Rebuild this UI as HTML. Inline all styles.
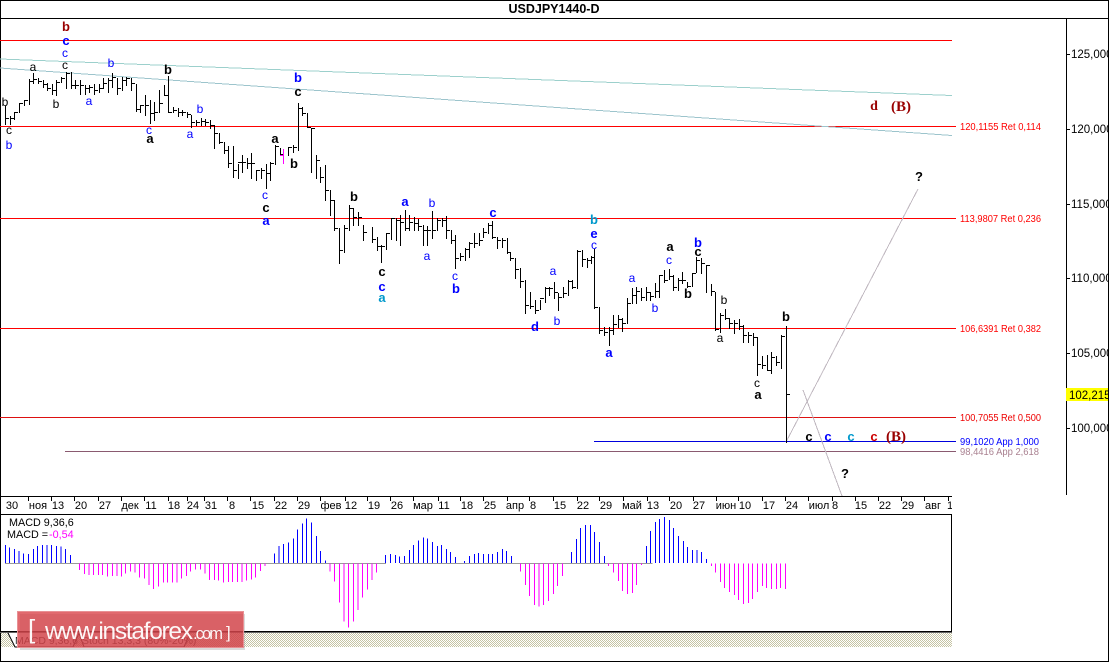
<!DOCTYPE html>
<html><head><meta charset="utf-8"><style>
html,body{margin:0;padding:0;background:#fff;width:1109px;height:662px;overflow:hidden}
svg{display:block;font-family:"Liberation Sans",sans-serif}
.r{font-size:12px;text-anchor:middle}
.h{font-size:13px;font-weight:bold;text-anchor:middle}
.s{font-family:"Liberation Serif",serif;font-size:15px;font-weight:bold;text-anchor:middle;fill:#990000}
.d{font-size:11px;text-anchor:middle;fill:#000}
.p{font-size:11.5px;fill:#000}
.l{font-size:10px}
.k{fill:#000}.bl{fill:#0000ff}.cy{fill:#0099cc}.dr{fill:#990000}.rd{fill:#cc0000}
</style></head><body>
<svg width="1109" height="662" viewBox="0 0 1109 662" xmlns="http://www.w3.org/2000/svg">
<defs><pattern id="ht" width="2" height="2" patternUnits="userSpaceOnUse"><rect width="2" height="2" fill="#fff"/><rect width="1" height="1" fill="#c6c4a4"/><rect x="1" y="1" width="1" height="1" fill="#c6c4a4"/></pattern></defs>
<rect width="1109" height="662" fill="#fff"/>
<g shape-rendering="crispEdges" fill="none">
<path d="M.5 0V661.5H1108.5V0M0 .5H1109M0 18.5H1108.5M1066.5 18V495" stroke="#000"/>
<path d="M1067 54.5h3M1067 129.5h3M1067 204.5h3M1067 278.5h3M1067 353.5h3M1067 428.5h3" stroke="#000"/>
<path d="M0 496.5H952M0 514.5H951.5V631M0 631.5H952" stroke="#000"/>
<path d="M0 632.5H952" stroke="#666"/>
<rect x="1" y="633" width="951" height="14" fill="url(#ht)"/>
<path d="M28.5 497v4M51.5 497v4M74.5 497v4M98.5 497v4M121.5 497v4M144.5 497v4M168.5 497v4M187.5 497v4M204.5 497v4M227.5 497v4M250.5 497v4M274.5 497v4M297.5 497v4M320.5 497v4M345.5 497v4M367.5 497v4M390.5 497v4M413.5 497v4M438.5 497v4M460.5 497v4M483.5 497v4M507.5 497v4M529.5 497v4M553.5 497v4M577.5 497v4M599.5 497v4M623.5 497v4M647.5 497v4M669.5 497v4M693.5 497v4M716.5 497v4M738.5 497v4M762.5 497v4M785.5 497v4M808.5 497v4M832.5 497v4M855.5 497v4M878.5 497v4M901.5 497v4M924.5 497v4M948.5 497v4" stroke="#000"/>
<path d="M0 40.5H952" stroke="#ff0000"/>
<path d="M0 126.5H956M0 218.5H956M0 328.5H956" stroke="#ff0000"/>
<path d="M0 417.5H956" stroke="#dd1111"/>
<path d="M594 441.5H956" stroke="#0000dd"/>
<path d="M65 451.5H956" stroke="#8a5a70"/>
</g>
<path d="M0 59 L952 95.5" stroke="#9cd0cc" stroke-width="1" fill="none" shape-rendering="crispEdges"/>
<path d="M0 68 L952 135.5" stroke="#9cc4cc" stroke-width="1" fill="none" shape-rendering="crispEdges"/>
<path d="M786 442L918 189M803 390L842 496" stroke="#c0b8c0" stroke-width="1" fill="none" shape-rendering="crispEdges"/>
<g transform="translate(.5,.5)" shape-rendering="crispEdges" fill="none" stroke="#000" stroke-linecap="square">
<path d="M5 106V124M5 118h3M10 116V124M10 118h3M14 112V119M14 112h3M19 103V112M19 103h3M24 100V105M24 100h3M29 79V104M29 81h3M33 73V83M33 79h3M38 78V83M38 81h3M43 80V87M43 84h3M47 83V90M47 88h3M52 84V94M52 90h3M56 80V95M56 82h3M61 77V82M61 78h3M66 72V88M66 73h3M71 72V88M71 85h3M75 80V88M75 85h3M80 80V94M80 85h3M85 85V94M85 88h3M89 85V92M89 87h3M94 84V94M94 90h3M99 84V92M99 88h3M103 78V88M103 83h3M108 78V92M108 80h3M112 73V87M112 77h3M117 78V94M117 88h3M122 77V90M122 80h3M126 77V85M126 78h3M131 78V90M131 83h3M136 84V111M136 109h3M140 105V112M140 105h3M145 95V115M145 105h3M150 100V123M150 113h3M154 102V120M154 112h3M159 90V112M159 103h3M164 85V95M164 95h3M168 76V112M168 112h3M173 107V112M173 110h3M178 108V116M178 112h3M182 110V115M182 112h3M187 112V117M187 114h3M191 115V127M191 122h3M196 120V125M196 122h3M201 118V125M201 121h3M205 119V125M205 122h3M210 120V128M210 125h3M214 125V148M214 133h3M219 133V143M219 142h3M224 142V153M224 150h3M228 146V167M228 163h3M233 146V177M233 170h3M238 164V178M238 162h3M242 155V172M242 162h3M247 158V168M247 163h3M251 153V178M251 163h3M256 170V180M256 170h3M261 168V178M261 170h3M266 164V188M266 173h3M270 162V180M270 163h3M275 145V164M275 146h3M280 148V155M280 154h3M288 148V155M288 147h3M293 145V152M293 147h3M298 103V150M298 108h3M302 107V115M302 113h3M307 113V127M307 127h3M311 128V172M311 128h3M316 155V178M316 160h3M320 167V182M320 177h3M325 165V200M325 190h3M330 190V215M330 200h3M334 200V230M334 228h3M339 228V263M339 250h3M344 225V252M344 228h3M349 205V230M349 208h3M353 208V225M353 217h3M358 212V225M358 217h3M363 225V240M363 232h3M372 227V242M372 239h3M377 237V250M377 246h3M381 245V262M381 246h3M386 233V249M386 233h3M391 218V239M391 218h3M396 218V240M396 220h3M400 215V245M400 222h3M405 210V230M405 228h3M409 215V230M409 222h3M414 217V230M414 223h3M418 219V230M418 226h3M423 225V245M423 230h3M427 226V245M427 230h3M432 211V238M432 230h3M437 218V230M437 220h3M442 218V226M442 220h3M446 216V238M446 230h3M451 230V243M451 240h3M455 235V268M455 258h3M460 253V260M460 256h3M465 248V260M465 249h3M469 242V257M469 243h3M474 233V247M474 243h3M479 233V245M479 240h3M483 228V237M483 232h3M488 223V233M488 225h3M492 221V238M492 237h3M497 237V248M497 240h3M502 238V247M502 240h3M507 238V253M507 252h3M510 252V260M510 258h3M515 258V278M515 269h3M520 268V287M520 281h3M525 280V313M525 305h3M530 292V308M530 306h3M535 300V313M535 310h3M540 300V309M540 298h3M545 287V302M545 288h3M549 287V295M549 288h3M554 282V298M554 292h3M558 293V310M558 297h3M563 287V297M563 293h3M568 280V295M568 281h3M572 280V288M572 287h3M577 250V288M577 251h3M582 250V266M582 259h3M587 258V267M587 260h3M591 256V263M591 257h3M594 249V308M594 307h3M599 307V333M599 330h3M604 327V335M604 332h3M609 327V345M609 330h3M613 315V334M613 324h3M618 315V327M618 319h3M622 318V331M622 323h3M627 298V323M627 303h3M632 288V303M632 295h3M636 287V303M636 291h3M641 288V300M641 297h3M646 287V300M646 292h3M650 292V300M650 296h3M655 283V297M655 291h3M659 275V297M659 275h3M664 270V282M664 280h3M669 269V279M669 276h3M673 275V290M673 287h3M678 278V290M678 280h3M682 272V283M682 280h3M687 282V287M687 286h3M692 273V286M692 273h3M696 257V272M696 260h3M701 258V273M701 263h3M706 265V292M706 265h3M711 284V295M711 291h3M715 292V330M715 329h3M720 313V332M720 315h3M725 309V319M725 318h3M729 318V328M729 323h3M734 320V333M734 323h3M739 319V329M739 326h3M743 325V342M743 335h3M748 332V342M748 335h3M753 333V345M753 337h3M757 337V375M757 364h3M762 356V368M762 365h3M767 355V370M767 370h3M771 352V373M771 357h3M776 356V365M776 362h3M781 335V368M781 336h3M786 326V442M786 394h3"/>
<path d="M283 149V163M280 155h3" stroke="#ff00ff"/>
</g>
<g class="d" font-size="11">
<text x="12" y="509" class="d">30</text><text x="38" y="509" class="d">ноя</text><text x="58" y="509" class="d">13</text><text x="81" y="509" class="d">20</text><text x="105" y="509" class="d">27</text><text x="130" y="509" class="d">дек</text><text x="151" y="509" class="d">11</text><text x="174" y="509" class="d">18</text><text x="193" y="509" class="d">24</text><text x="211" y="509" class="d">31</text><text x="232" y="509" class="d">8</text><text x="258" y="509" class="d">15</text><text x="281" y="509" class="d">22</text><text x="304" y="509" class="d">29</text><text x="331" y="509" class="d">фев</text><text x="351" y="509" class="d">12</text><text x="374" y="509" class="d">19</text><text x="397" y="509" class="d">26</text><text x="423" y="509" class="d">мар</text><text x="444" y="509" class="d">11</text><text x="467" y="509" class="d">18</text><text x="490" y="509" class="d">25</text><text x="515" y="509" class="d">апр</text><text x="533" y="509" class="d">8</text><text x="560" y="509" class="d">15</text><text x="583" y="509" class="d">22</text><text x="606" y="509" class="d">29</text><text x="632" y="509" class="d">май</text><text x="653" y="509" class="d">13</text><text x="676" y="509" class="d">20</text><text x="699" y="509" class="d">27</text><text x="726" y="509" class="d">июн</text><text x="745" y="509" class="d">10</text><text x="769" y="509" class="d">17</text><text x="792" y="509" class="d">24</text><text x="819" y="509" class="d">июл</text><text x="835" y="509" class="d">8</text><text x="861" y="509" class="d">15</text><text x="885" y="509" class="d">22</text><text x="908" y="509" class="d">29</text><text x="933" y="509" class="d">авг</text><text x="950" y="509" style="font-size:11px">1</text>
</g>
<rect x="952" y="497" width="6" height="17" fill="#fff"/>
<rect x="1066" y="388" width="42" height="13" fill="#ffff00"/>
<text x="1071" y="58" class="p">125,000</text><text x="1071" y="133" class="p">120,000</text><text x="1071" y="208" class="p">115,000</text><text x="1071" y="282" class="p">110,000</text><text x="1071" y="357" class="p">105,000</text><text x="1069" y="399" class="p">102,215</text><text x="1071" y="432" class="p">100,000</text>
<rect x="1108" y="0" width="1" height="662" fill="#000"/><rect x="1109" width="10" height="662" fill="#fff"/>
<text x="554" y="13" style="font-size:12.5px;font-weight:bold;text-anchor:middle" fill="#000">USDJPY1440-D</text>
<g class="l">
<text x="960" y="130" fill="#ff0000" textLength="81" lengthAdjust="spacingAndGlyphs">120,1155 Ret 0,114</text>
<text x="960" y="222" fill="#ff0000" textLength="81" lengthAdjust="spacingAndGlyphs">113,9807 Ret 0,236</text>
<text x="960" y="332" fill="#ff0000" textLength="81" lengthAdjust="spacingAndGlyphs">106,6391 Ret 0,382</text>
<text x="960" y="421" fill="#ee0000" textLength="81" lengthAdjust="spacingAndGlyphs">100,7055 Ret 0,500</text>
<text x="960" y="445" fill="#0000ff" textLength="79" lengthAdjust="spacingAndGlyphs">99,1020 App 1,000</text>
<text x="960" y="455" fill="#a98090" textLength="79" lengthAdjust="spacingAndGlyphs">98,4416 App 2,618</text>
</g>
<text x="66" y="31" class="h dr">b</text><text x="66" y="45" class="h bl">c</text><text x="65" y="57" class="r bl">c</text><text x="65" y="69" class="r k">c</text><text x="33" y="71" class="r k">a</text><text x="111" y="67" class="r bl">b</text><text x="168" y="74" class="h k">b</text><text x="5" y="106" class="r k">b</text><text x="9" y="134" class="r k">c</text><text x="9" y="149" class="r bl">b</text><text x="56" y="108" class="r k">b</text><text x="89" y="105" class="r bl">a</text><text x="149" y="134" class="r bl">c</text><text x="150" y="143" class="h k">a</text><text x="200" y="113" class="r bl">b</text><text x="190" y="138" class="r bl">a</text><text x="275" y="143" class="h k">a</text><text x="294" y="168" class="h k">b</text><text x="298" y="82" class="h bl">b</text><text x="298" y="96" class="h k">c</text><text x="265" y="199" class="r bl">c</text><text x="266" y="212" class="h k">c</text><text x="266" y="225" class="h bl">a</text><text x="354" y="201" class="h k">b</text>
<text x="382" y="276" class="h k">c</text><text x="382" y="291" class="h bl">c</text><text x="382" y="302" class="h cy">a</text><text x="405" y="206" class="h bl">a</text><text x="432" y="207" class="r bl">b</text><text x="427" y="260" class="r bl">a</text><text x="455" y="280" class="r bl">c</text><text x="456" y="293" class="h bl">b</text><text x="493" y="217" class="h bl">c</text><text x="535" y="331" class="h bl">d</text><text x="553" y="275" class="r bl">a</text><text x="557" y="325" class="r bl">b</text><text x="594" y="224" class="h cy">b</text><text x="594" y="238" class="h bl">e</text><text x="594" y="249" class="r bl">c</text><text x="609" y="357" class="h bl">a</text><text x="632" y="282" class="r bl">a</text><text x="655" y="312" class="r bl">b</text><text x="669" y="264" class="r bl">c</text><text x="670" y="251" class="h k">a</text><text x="698" y="247" class="h bl">b</text><text x="698" y="256" class="h k">c</text><text x="688" y="298" class="h k">b</text><text x="724" y="304" class="r k">b</text><text x="720" y="342" class="r k">a</text>
<text x="757" y="387" class="r k">c</text><text x="758" y="399" class="h k">a</text><text x="786" y="321" class="h k">b</text><text x="809" y="441" class="h k">c</text><text x="828" y="441" class="h bl">c</text><text x="851" y="441" class="h cy">c</text><text x="874" y="441" class="h rd">c</text><text x="896" y="441" class="s">(B)</text><text x="845" y="478" class="h k">?</text><text x="874" y="110" class="s" style="font-size:14px">d</text><text x="901" y="111" class="s">(B)</text><text x="919" y="181" class="h k">?</text>
<g transform="translate(0,490) scale(.33333)" shape-rendering="crispEdges" fill="none" stroke-width="3">
<path d="M15 220H1158" stroke="#999"/>
<path stroke="#0000ff" d="M16 219V165M28 219V172M43 219V177M57 219V183M70 219V191M85 219V192M100 219V177M113 219V168M127 219V165M141 219V165M155 219V165M169 219V168M183 219V170M197 219V177M211 219V195M823 219V190M837 219V168M851 219V162M865 219V157M880 219V145M893 219V118M907 219V100M919 219V85M935 219V97M949 219V138M961 219V183M976 219V212M1156 219V195M1171 219V192M1186 219V195M1199 219V200"/>
<path stroke="#ff00ff" d="M239 221V240M253 221V252M267 221V255M281 221V255M295 221V255M307 221V255M323 221V260M337 221V258M351 221V258M364 221V260M377 221V250M391 221V245M405 221V248M419 221V262M433 221V265M447 221V285M461 221V297M475 221V290M490 221V278M503 221V278M517 221V278M531 221V278M545 221V265M559 221V258M571 221V245M587 221V238M601 221V238M615 221V250M629 221V270M643 221V270M656 221V272M671 221V278M685 221V276M698 221V276M712 221V276M726 221V276M740 221V272M754 221V268M767 221V262M781 221V243M795 221V228M990 221V245M1004 221V275M1018 221V338M1032 221V395M1045 221V413M1060 221V395M1074 221V360M1088 221V323M1102 221V298M1116 221V270M1130 221V248"/>
</g>
<g transform="translate(400,490) scale(.33333)" shape-rendering="crispEdges" fill="none" stroke-width="3">
<path d="M0 220H758" stroke="#999"/>
<path stroke="#0000ff" d="M13 219V198M28 219V180M41 219V165M55 219V152M70 219V142M83 219V145M97 219V156M112 219V168M124 219V165M139 219V177M152 219V186M166 219V201M194 219V213M208 219V198M223 219V192M236 219V189M250 219V192M265 219V192M278 219V192M292 219V186M307 219V177M320 219V183M334 219V198M514 219V186M529 219V147M541 219V114M556 219V105M571 219V105M583 219V126M598 219V156M613 219V198M739 219V168M751 219V123M766 219V96M779 219V87M793 219V81M808 219V90M821 219V114M835 219V138M850 219V153M862 219V171M877 219V180M891 219V180M904 219V186M919 219V207"/>
<path stroke="#ff00ff" d="M361 221V245M376 221V285M389 221V318M403 221V345M417 221V350M430 221V345M445 221V333M460 221V312M473 221V288M487 221V258M625 221V228M640 221V248M655 221V273M667 221V303M683 221V312M697 221V309M709 221V285M724 221V225M934 221V228M946 221V248M961 221V276M973 221V294M988 221V306M1003 221V315M1015 221V330M1030 221V342M1045 221V339M1057 221V327M1072 221V306M1087 221V288M1099 221V294M1114 221V297M1129 221V297M1142 221V294M1156 221V297"/>
</g>
<text x="9" y="526" style="font-size:10.8px" fill="#000">MACD 9,36,6</text>
<text x="7" y="538" style="font-size:10.8px" fill="#000">MACD =</text><text x="49" y="538" style="font-size:10.8px" fill="#ff00ff">-0,54</text>
<path d="M8 633L15 647H73L79 633M79 633L84 647H184L190 633" fill="#fff" stroke="#000" stroke-width="1"/>
<text x="15" y="644" style="font-size:10.5px" fill="#222">MACD 9,36,6</text>
<text x="82" y="644" style="font-size:10.5px" fill="#222">Stoch 13,3,3 (80%-20%)</text>
<rect x="20" y="614" width="225" height="36" fill="#888" opacity=".3"/>
<rect x="17.5" y="611.5" width="226" height="36" fill="#d83f45" fill-opacity=".78" stroke="#e89094"/>
<text x="28" y="638" style="font-size:26px;font-weight:normal" fill="#fff" fill-opacity=".95">[</text>
<text x="45" y="639" style="font-size:24.5px" fill="#fff" fill-opacity=".95" textLength="148">www.instaforex</text>
<text x="193" y="639" style="font-size:16.5px" fill="#fff" fill-opacity=".95" textLength="30">.com</text>
<text x="226" y="638" style="font-size:17px" fill="#fff" fill-opacity=".95">]</text>
</svg>
</body></html>
